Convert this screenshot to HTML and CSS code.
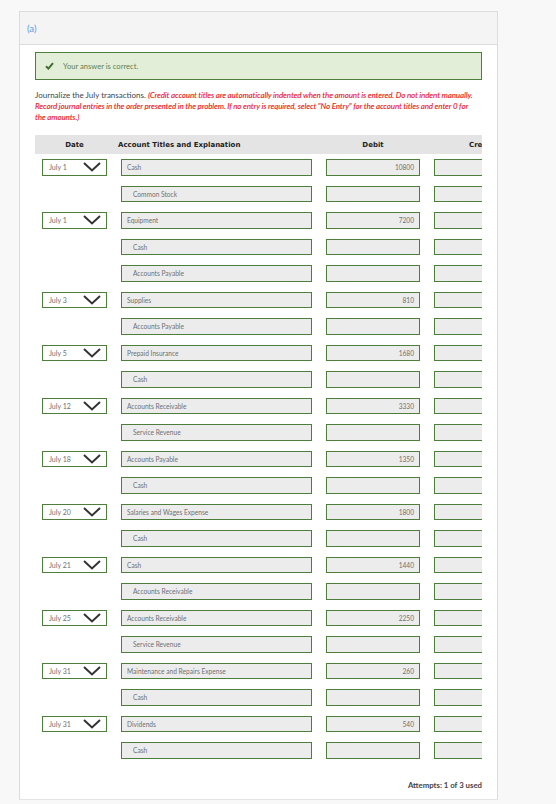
FILE: index.html
```html
<!DOCTYPE html>
<html>
<head>
<meta charset="utf-8">
<link rel="stylesheet" href="styles.css">
</head>
<body>
<div class="card">
  <div class="card-head">(a)</div>
  <div class="card-body">
    <div class="success">
      <svg class="check" width="9" height="8" viewBox="0 0 9 8"><polyline points="1,4.2 3.4,6.6 8,1.2" fill="none" stroke="#3f6e2f" stroke-width="2"/></svg>
      <span>Your answer is correct.</span>
    </div>
    <p class="instr">Journalize the July transactions. <em>(Credit account titles are automatically indented when the amount is entered. Do not indent manually.<br>Record journal entries in the order presented in the problem. If no entry is required, select "No Entry" for the account titles and enter 0 for<br>the amounts.)</em></p>
    <div class="table">
      <div class="thead">
        <div class="th c-date">Date</div>
        <div class="th c-acct">Account Titles and Explanation</div>
        <div class="th c-num">Debit</div>
        <div class="th c-num c-cr">Credit</div>
      </div>
      <div class="rows" id="rows"></div>
    </div>
    <div class="attempts">Attempts: 1 of 3 used</div>
  </div>
</div>
<script src="app.js"></script>
</body>
</html>
```

FILE: app.js
```js
const data = [
  ["July 1", "Cash", "10800", "Common Stock"],
  ["July 1", "Equipment", "7200", "Cash", "Accounts Payable"],
  ["July 3", "Supplies", "810", "Accounts Payable"],
  ["July 5", "Prepaid Insurance", "1680", "Cash"],
  ["July 12", "Accounts Receivable", "3330", "Service Revenue"],
  ["July 18", "Accounts Payable", "1350", "Cash"],
  ["July 20", "Salaries and Wages Expense", "1800", "Cash"],
  ["July 21", "Cash", "1440", "Accounts Receivable"],
  ["July 25", "Accounts Receivable", "2250", "Service Revenue"],
  ["July 31", "Maintenance and Repairs Expense", "260", "Cash"],
  ["July 31", "Dividends", "540", "Cash"]
];
const chev = '<svg class="chev" width="18" height="10" viewBox="0 0 18 10"><polyline points="1,1 9,8.5 17,1" fill="none" stroke="#333" stroke-width="2"/></svg>';
let html = "";
for (const e of data) {
  html += '<div class="row"><div class="cell c-date"><div class="sel"><span>' + e[0] + '</span>' + chev + '</div></div>' +
    '<div class="cell c-acct"><div class="box">' + e[1] + '</div></div>' +
    '<div class="cell c-num"><div class="box num">' + e[2] + '</div></div>' +
    '<div class="cell c-num c-cr"><div class="box"></div></div></div>';
  for (let i = 3; i < e.length; i++) {
    html += '<div class="row"><div class="cell c-date"></div>' +
      '<div class="cell c-acct"><div class="box ind">' + e[i] + '</div></div>' +
      '<div class="cell c-num"><div class="box num"></div></div>' +
      '<div class="cell c-num c-cr"><div class="box"></div></div></div>';
  }
}
document.getElementById("rows").innerHTML = html;
```

FILE: styles.css
```css
html, body {
  margin: 0;
  padding: 0;
  background: #f8f8f8;
  font-family: Lato, "Open Sans", sans-serif;
  color: #444;
}
.card {
  margin: 11px 0 0 19px;
  width: 477px;
  height: 787px;
  background: #fff;
  border: 1px solid #dcdcdc;
  border-bottom-color: #e4e4e4;
}
.card-head {
  height: 32px;
  background: #f4f4f4;
  border-bottom: 1px solid #dcdcdc;
  padding-left: 7px;
  display: flex;
  align-items: center;
  font-size: 9.5px;
  color: #5a9be0;
}
.card-body {
  padding: 7px 15px 0 15px;
}
.success {
  height: 26px;
  border: 1px solid #4e7e3b;
  background: #e2eed8;
  display: flex;
  align-items: center;
  padding-left: 9px;
  font-size: 7.6px;
  color: #5f7f52;
}
.check { margin-right: 9px; }
.instr {
  margin: 10px 0 0 0;
  font-size: 8px;
  line-height: 11px;
  color: #444;
  white-space: nowrap;
}
.instr em {
  color: #e8262a;
  font-style: italic;
  font-weight: 600;
  letter-spacing: -0.15px;
}
.table {
  margin-top: 12px;
  width: 447px;
  overflow: hidden;
}
.thead {
  display: flex;
  height: 19px;
  background: #e4e4e4;
  align-items: center;
  margin-bottom: 5px;
}
.th {
  font-family: "DejaVu Sans", Verdana, sans-serif;
  font-weight: bold;
  font-size: 7px;
  color: #222;
  white-space: nowrap;
}
.c-date { width: 79px; flex: none; text-align: center; }
.c-acct { width: 205px; flex: none; }
.c-num { width: 108px; flex: none; text-align: center; }
.th.c-acct { padding-left: 4px; box-sizing: border-box; }
.th.c-cr { text-align: left; padding-left: 42px; box-sizing: border-box; }
.row {
  display: flex;
  height: 26.5px;
  align-items: flex-start;
}
.cell { box-sizing: border-box; }
.cell.c-date { padding-left: 7px; }
.cell.c-acct { padding-left: 7px; padding-right: 7px; }
.cell.c-num { padding-left: 7px; padding-right: 7px; }
.sel, .box {
  box-sizing: border-box;
  height: 16.5px;
  border: 1px solid #4e7e3b;
  background: #fff;
  display: flex;
  align-items: center;
  font-size: 6.6px;
  color: #707070;
  white-space: nowrap;
  overflow: hidden;
}
.sel {
  width: 65px;
  padding-left: 6px;
  justify-content: space-between;
  padding-right: 5px;
  font-size: 7px;
}
.chev { display: block; }
.box {
  background: #ececec;
  padding-left: 5px;
  text-align: left;
}
.box.ind { padding-left: 11px; }
.box.num { justify-content: flex-end; padding-right: 5px; }
.attempts {
  margin-top: 11px;
  width: 447px;
  text-align: right;
  font-size: 7.8px;
  line-height: 10px;
  font-weight: bold;
  color: #444;
}
```
